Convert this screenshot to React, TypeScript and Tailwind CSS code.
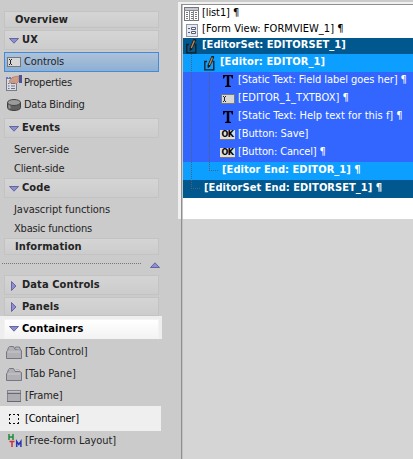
import React from "react";

const Down = () => (
  <svg width="10" height="6" viewBox="0 0 10 6" className="shrink-0">
    <path d="M.5.5h9L5 5.2z" fill="#8f8fd0" stroke="#5c5c9c" strokeWidth=".9" />
  </svg>
);
const Right = () => (
  <svg width="6" height="10" viewBox="0 0 6 10" className="shrink-0">
    <path d="M.5.5v9L5 5z" fill="#8f8fd0" stroke="#5c5c9c" strokeWidth=".9" />
  </svg>
);

const TextboxIcon = () => (
  <svg width="14" height="10" viewBox="0 0 14 10">
    <rect x=".5" y=".5" width="13" height="9" fill="#d6d6d6" stroke="#74777c" />
    <path d="M2 2.500h1M4 2.500h1M3.500 3v4M2 7.500h1M4 7.500h1" stroke="#222" />
  </svg>
);
const PropertiesIcon = () => (
  <svg width="16" height="16" viewBox="0 0 16 16">
    <rect x=".5" y="3.500" width="10" height="12" fill="#dcdce4" stroke="#777b8c" />
    <path d="M0 3h9" stroke="#6874c4" strokeWidth="2" strokeDasharray="2 1" />
    <path d="M2 8.500h1.500M2 11h1.500M2 13.500h1.500M5 8.500h4M5 11h4M5 13.500h4" stroke="#6c7080" />
    <path d="M3 6l4-4 6-1v5l-3 3-3-2-3 1z" fill="#cf9c84" stroke="#a87460" strokeWidth=".6" />
    <rect x="13" y="0" width="3" height="8" fill="#4a549c" />
  </svg>
);
const DatabaseIcon = () => (
  <svg width="14" height="12" viewBox="0 0 14 12">
    <path d="M.5 3.500v5c0 4 13 4 13 0v-5z" fill="#616161" stroke="#3f3f3f" />
    <path d="M2.500 5v4.500" stroke="#999" strokeWidth="2" />
    <ellipse cx="7" cy="3.500" rx="6.500" ry="3" fill="#9b9b9b" stroke="#444" />
  </svg>
);
const FolderIcon = ({ two = false }: { two?: boolean }) => (
  <svg width="16" height="13" viewBox="0 0 16 13">
    <path d="M.5 12.500v-7l1-1 1-3 1-1h4l1.500 3h5l1.500 1v8z" fill="#b0b0b5" stroke="#777784" />
    <path d="M2 6h12" stroke="#c9c9cd" />
    {two ? <path d="M8.500 3l1-2h4l1 3" fill="#b7b7bd" stroke="#777784" /> : <path d="M9 2.500l1-1h3l1 2" fill="none" stroke="#b1b1b5" />}
  </svg>
);
const FrameIcon = () => (
  <svg width="14" height="12" viewBox="0 0 14 12">
    <rect x=".5" y=".5" width="13" height="11" fill="#adadb2" stroke="#858590" />
    <path d="M1 1.500h12" stroke="#c0c0c5" />
    <path d="M0 3.500h14M0 11.500h14" stroke="#686874" />
  </svg>
);
const ContainerIcon = () => (
  <svg width="10" height="10" viewBox="0 0 10 10">
    <path d="M0 .5h2M4 .5h2M8 .5h2M0 9.500h2M4 9.500h2M8 9.500h2M.5 0v2M.5 4v2M.5 8v2M9.500 0v2M9.500 4v2M9.500 8v2" stroke="#111" />
  </svg>
);
const HtmIcon = () => (
  <svg width="14" height="14" viewBox="0 0 14 14" fill="none" className="ml-[2px]">
    <path d="M1 0v6M5 0v6M1 3h4" stroke="#218b3a" strokeWidth="1.500" />
    <path d="M1.500 7.500h5M4 7v6" stroke="#d02c38" strokeWidth="1.500" />
    <path d="M8.700 13V7.500l2.100 3 2.100-3V13" stroke="#2636b4" strokeWidth="1.500" />
  </svg>
);
const TableIcon = () => (
  <svg width="15" height="14" viewBox="0 0 15 14">
    <rect x=".5" y=".5" width="14" height="13" fill="#fff" stroke="#72757c" />
    <path d="M1 2h13" stroke="#c8c8ce" strokeWidth="2" />
    <path d="M0 3.500h15M5.500 3v11M9.500 3v11" stroke="#858891" />
    <path d="M2 5.500h2M2 7.500h2M2 9.500h2M2 11.500h2M7 5.500h2M7 7.500h2M7 9.500h2M7 11.500h2M11 5.500h2M11 7.500h2M11 9.500h2M11 11.500h2" stroke="#777" />
  </svg>
);
const FormIcon = () => (
  <svg width="12" height="13" viewBox="0 0 12 13">
    <rect x=".5" y=".5" width="11" height="12" fill="#e8eaf2" stroke="#9297a8" />
    <path d="M2 4.500h2M2 8.500h2" stroke="#555b74" />
    <path d="M5.500 3.500h4v2h-4zM5.500 7.500h4v2h-4z" fill="#fff" stroke="#555b74" />
  </svg>
);
const EditIcon = () => (
  <svg width="11" height="15" viewBox="0 0 11 15">
    <path d="M3 5.500H.800v8.300h9V5.500H8.500" fill="none" stroke="#161c22" strokeWidth="1.300" />
    <path d="M7.500 0h2l.8 1-4.200 9.500-2.300 1.800-.3-2.800z" fill="#1c1c1c" />
    <path d="M8.400 1.500L5.300 9" stroke="#c08448" strokeWidth="1.400" />
  </svg>
);
const StaticIcon = () => (
  <svg width="10" height="12" viewBox="0 0 10 12">
    <path d="M0 0h10v3.500H9L8 1.200H6.200v9.300l1.800.5v1H2v-1l1.800-.5V1.200H2L1 3.500H0z" fill="#000" />
  </svg>
);
const OkIcon = () => (
  <span className="flex h-[10px] w-[15px] shrink-0 items-center justify-center border-b border-[#777] bg-[#dedede] font-['DejaVu_Sans',sans-serif] text-[8px] leading-none font-bold tracking-[-0.4px] text-black">
    OK
  </span>
);

const Head = ({ label, className, arrow }: { label: string; className: string; arrow?: "down" | "right" }) => (
  <div className={`ml-1 flex w-[155px] shrink-0 items-center border border-[#c3c3c3] bg-linear-to-b from-[#d5d5d5] to-[#cccccc] font-bold tracking-[0.1px] ${className}`}>
    {arrow && <span className="ml-1 flex w-[13px] shrink-0 justify-start pt-px">{arrow === "down" ? <Down /> : <span className="pl-[2px]"><Right /></span>}</span>}
    <span className={arrow ? "" : "pl-[10px]"}>{label}</span>
  </div>
);
const Item = ({ icon, label, className = "h-[22px]", text = "tracking-[-0.05px]" }: { icon: React.ReactNode; label: string; className?: string; text?: string }) => (
  <div className={`flex shrink-0 items-center ${className}`}>
    <span className="flex w-[25px] shrink-0 justify-center pl-[3px]">{icon}</span>
    <span className={text}>{label}</span>
  </div>
);
const Row = ({ icon, label, className, text = "tracking-[0.05px]" }: { icon?: React.ReactNode; label: string; className: string; text?: string }) => (
  <div className={`flex shrink-0 items-center ${className}`}>
    {icon && <span className="mr-[2px] flex w-[17px] shrink-0 items-center justify-center">{icon}</span>}
    <span className={`pb-[2px] ${text}`}>{label}</span>
  </div>
);

export default function App() {
  return (
    <div className="flex h-[459px] w-[413px] overflow-hidden bg-[#cbcbcb] font-['DejaVu_Sans_Condensed','DejaVu_Sans',sans-serif] text-[11px] leading-[16px] whitespace-nowrap text-[#242424]">
      <aside className="flex w-[178px] shrink-0 flex-col pt-[11px]">
        <Head label="Overview" className="h-[17px]" />
        <Head label="UX" arrow="down" className="mt-[2px] h-5" />
        <div className="mt-[2px] ml-1 flex h-5 w-[155px] shrink-0 items-center border border-[#428bd8] bg-linear-to-b from-[#adc2d9] to-[#8dafd4]">
          <span className="ml-[2px] w-[17px]"><TextboxIcon /></span>
          <span className="tracking-[-0.1px]">Controls</span>
        </div>
        <Item icon={<PropertiesIcon />} label="Properties" text="-ml-px tracking-[-0.2px]" />
        <Item icon={<DatabaseIcon />} label="Data Binding" text="-ml-px tracking-[-0.3px]" />
        <Head label="Events" arrow="down" className="mt-[2px] h-5" />
        <div className="mt-[2px] h-[19px] shrink-0 pt-[2px] pl-[14px] tracking-[-0.05px]">Server-side</div>
        <div className="h-[19px] shrink-0 pt-[2px] pl-[14px] tracking-[-0.2px]">Client-side</div>
        <Head label="Code" arrow="down" className="h-5" />
        <div className="mt-[2px] h-[19px] shrink-0 pt-[2px] pl-[14px] tracking-[-0.05px]">Javascript functions</div>
        <div className="h-[19px] shrink-0 pt-[2px] pl-[14px] tracking-[-0.2px]">Xbasic functions</div>
        <Head label="Information" className="h-[17px]" />
        <div className="flex h-5 shrink-0 items-center pl-[2px]">
          <span className="mt-[-3px] w-[139px] border-t border-dotted border-[#777]" />
          <span className="ml-[9px] rotate-180"><Down /></span>
        </div>
        <Head label="Data Controls" arrow="right" className="h-5" />
        <Head label="Panels" arrow="right" className="mt-[2px] h-[19px]" />
        <div className="flex h-[23px] w-[162px] shrink-0 items-end bg-[#eeeeee] text-black">
          <div className="ml-1 flex h-5 w-[155px] items-center border border-[#f3f3f3] bg-linear-to-b from-white to-[#f3f3f3] font-bold tracking-[0.1px]">
            <span className="ml-1 w-[13px]"><Down /></span>Containers
          </div>
        </div>
        <Item icon={<FolderIcon two />} label="[Tab Control]" className="mt-[2px] h-[22px]" />
        <Item icon={<FolderIcon />} label="[Tab Pane]" />
        <Item icon={<FrameIcon />} label="[Frame]" className="h-[21px]" text="tracking-[-0.15px]" />
        <Item icon={<ContainerIcon />} label="[Container]" className="h-[25px] w-[161px] bg-[#efefef] text-black" text="tracking-[-0.2px]" />
        <Item icon={<HtmIcon />} label="[Free-form Layout]" className="h-[19px]" />
      </aside>
      <main className="relative flex min-w-0 flex-1 flex-col">
        <div className="mt-[2px] flex h-[217px] shrink-0 flex-col bg-[#f0f0f0] pl-[3px]">
          <div className="mt-[2px] flex h-[215px] border-t border-l border-[#8f8f8f]">
            <div className="flex min-w-0 flex-1 flex-col border-l border-[#c4c4c4] bg-white text-black">
              <Row icon={<TableIcon />} label="[list1] ¶" className="h-[17px]" text="tracking-[-0.1px]" />
              <Row icon={<FormIcon />} label="[Form View: FORMVIEW_1] ¶" className="h-4" />
              <Row icon={<EditIcon />} label="[EditorSet: EDITORSET_1]" className="h-4 bg-[#00588e] font-bold text-white" />
              <Row icon={<EditIcon />} label="[Editor: EDITOR_1]" className="h-[18px] bg-[#0c9fff] pl-[18px] font-bold text-white" text="tracking-[0.1px]" />
              <Row icon={<StaticIcon />} label="[Static Text: Field label goes her] ¶" className="h-[18px] bg-[#3366ff] pl-[36px] text-white" text="tracking-[-0.06px]" />
              <Row icon={<TextboxIcon />} label="[EDITOR_1_TXTBOX] ¶" className="h-[18px] bg-[#3366ff] pl-[36px] text-white" />
              <Row icon={<StaticIcon />} label="[Static Text: Help text for this f] ¶" className="h-[18px] bg-[#3366ff] pl-[36px] text-white" text="tracking-[0px]" />
              <Row icon={<OkIcon />} label="[Button: Save]" className="h-[18px] bg-[#3366ff] pl-[36px] text-white" text="tracking-[-0.1px]" />
              <Row icon={<OkIcon />} label="[Button: Cancel] ¶" className="h-[18px] bg-[#3366ff] pl-[36px] text-white" text="tracking-[-0.15px]" />
              <Row label="[Editor End: EDITOR_1] ¶" className="h-[18px] bg-[#0c9fff] pl-[39px] font-bold text-white" />
              <Row label="[EditorSet End: EDITORSET_1] ¶" className="h-[18px] bg-[#00588e] pl-[21px] font-bold text-white" />
            </div>
          </div>
        </div>
        <div className="ml-[3px] flex flex-1 border-l border-[#8f8f8f]">
          <div className="flex-1 border-l border-[#c0c0c0] bg-[#d5d5d5]" />
        </div>
        <div className="absolute top-[54px] left-[13px] h-[135px] w-[9px] border-b border-l border-dotted border-[#55606c]" />
        <div className="absolute top-[72px] left-[31px] h-[99px] w-[9px] border-b border-l border-dotted border-[#55606c]" />
      </main>
    </div>
  );
}
